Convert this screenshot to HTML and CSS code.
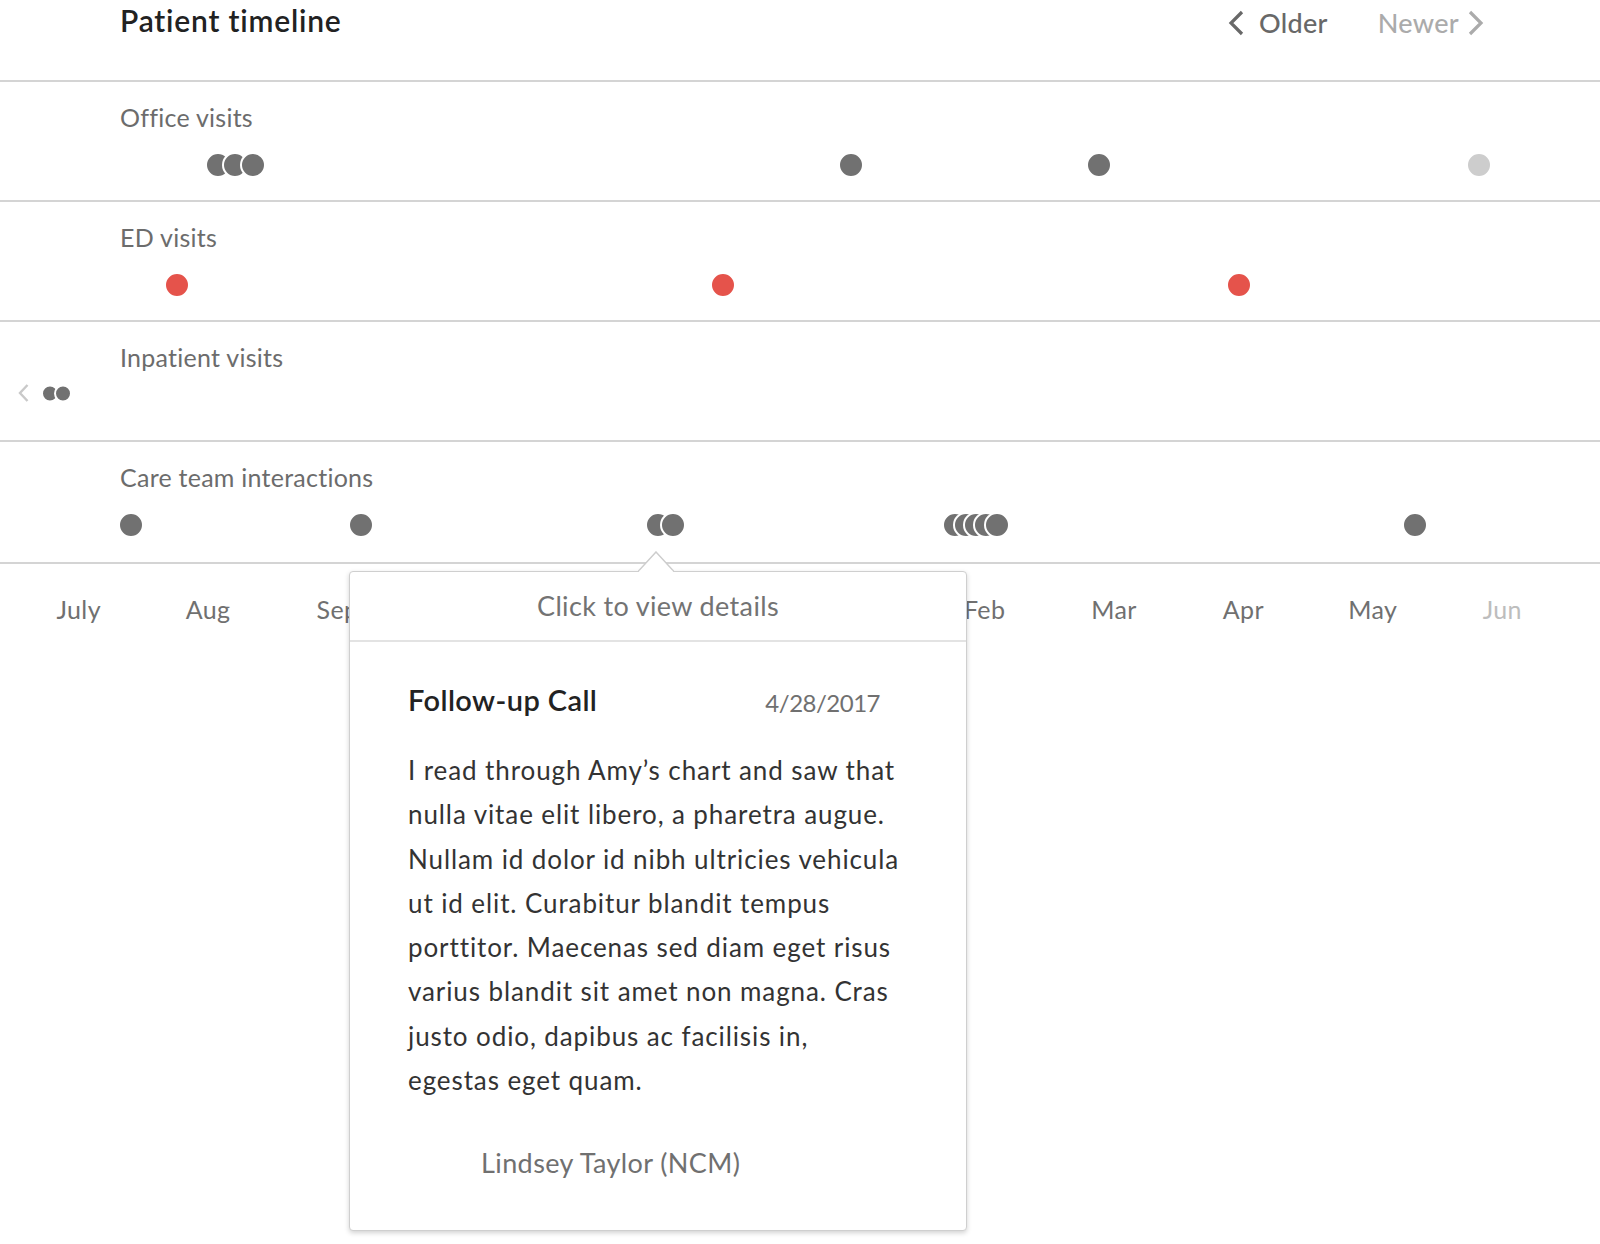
FILE: index.html
```html
<!DOCTYPE html>
<html lang="en">
<head>
<meta charset="utf-8">
<title>Patient timeline</title>
<link rel="stylesheet" href="styles.css">
</head>
<body>
<div class="page">
  <header class="header">
    <h1 class="title">Patient timeline</h1>
    <nav class="pager">
      <span class="pager-btn older">
        <svg class="chev" width="18" height="26" viewBox="0 0 18 26"><path d="M15 2 L4 13 L15 24" fill="none" stroke="currentColor" stroke-width="3.2"/></svg>
        <span>Older</span>
      </span>
      <span class="pager-btn newer">
        <span>Newer</span>
        <svg class="chev" width="18" height="26" viewBox="0 0 18 26"><path d="M3 2 L14 13 L3 24" fill="none" stroke="currentColor" stroke-width="3.2"/></svg>
      </span>
    </nav>
  </header>

  <section class="row">
    <div class="label">Office visits</div>
    <div class="track">
      <span class="dot" style="left:218px"></span>
      <span class="dot" style="left:235px"></span>
      <span class="dot" style="left:253px"></span>
      <span class="dot" style="left:851px"></span>
      <span class="dot" style="left:1099px"></span>
      <span class="dot future" style="left:1479px"></span>
    </div>
  </section>

  <section class="row">
    <div class="label">ED visits</div>
    <div class="track">
      <span class="dot red" style="left:177px"></span>
      <span class="dot red" style="left:723px"></span>
      <span class="dot red" style="left:1239px"></span>
    </div>
  </section>

  <section class="row">
    <div class="label">Inpatient visits</div>
    <div class="track">
      <div class="earlier">
        <svg class="chev-sm" width="13" height="19" viewBox="0 0 13 19"><path d="M10.5 1.5 L3 9.5 L10.5 17.5" fill="none" stroke="currentColor" stroke-width="2.4"/></svg>
        <span class="mini-dots">
          <span class="dot small"></span>
          <span class="dot small"></span>
        </span>
      </div>
    </div>
  </section>

  <section class="row row-last">
    <div class="label">Care team interactions</div>
    <div class="track">
      <span class="dot" style="left:131px"></span>
      <span class="dot" style="left:361px"></span>
      <span class="dot" style="left:658px"></span>
      <span class="dot" style="left:673px"></span>
      <span class="dot" style="left:955px"></span>
      <span class="dot" style="left:966px"></span>
      <span class="dot" style="left:976px"></span>
      <span class="dot" style="left:986px"></span>
      <span class="dot" style="left:997px"></span>
      <span class="dot" style="left:1415px"></span>
    </div>
  </section>

  <div class="months">
    <span>July</span><span>Aug</span><span>Sep</span><span>Oct</span><span>Nov</span><span>Dec</span>
    <span>Jan</span><span>Feb</span><span>Mar</span><span>Apr</span><span>May</span><span class="muted">Jun</span>
  </div>

  <div class="popover">
    <svg class="arrow" width="36" height="24" viewBox="0 0 36 24"><path d="M0 20.5 L18 1 L36 20.5" fill="#fff" stroke="#cdcdcd" stroke-width="1.5"/><rect x="1.2" y="19.8" width="33.6" height="4" fill="#fff"/></svg>
    <div class="pop-head">Click to view details</div>
    <div class="pop-body">
      <div class="pop-title-row">
        <span class="pop-title">Follow-up Call</span>
        <span class="pop-date">4/28/2017</span>
      </div>
      <p class="pop-text">I read through Amy’s chart and saw that<br>nulla vitae elit libero, a pharetra augue.<br>Nullam id dolor id nibh ultricies vehicula<br>ut id elit. Curabitur blandit tempus<br>porttitor. Maecenas sed diam eget risus<br>varius blandit sit amet non magna. Cras<br>justo odio, dapibus ac facilisis in,<br>egestas eget quam.</p>
      <div class="pop-author">Lindsey Taylor (NCM)</div>
    </div>
  </div>
</div>
</body>
</html>
```

FILE: styles.css
```css
* { box-sizing: border-box; }

html, body {
  margin: 0;
  padding: 0;
  background: #fff;
}

body {
  font-family: Lato, "Open Sans", sans-serif;
  color: #333;
}

.page {
  position: relative;
  width: 1600px;
  min-height: 1244px;
}

.header {
  display: flex;
  align-items: flex-start;
  height: 80px;
  padding: 2px 115px 0 120px;
}

.title {
  margin: 0;
  font-size: 30px;
  line-height: 36px;
  font-weight: 600;
  letter-spacing: 0.8px;
  color: #222;
}

.pager {
  margin-left: auto;
  display: flex;
  align-items: center;
  gap: 50px;
  padding-top: 3px;
  font-size: 27px;
  line-height: 36px;
  font-weight: 500;
  letter-spacing: 0.3px;
}

.pager-btn {
  display: flex;
  align-items: center;
  gap: 14px;
}

.older { color: #686868; }
.newer { color: #ababab; gap: 8px; }

.chev { display: block; }

.row {
  border-top: 2px solid #d4d4d4;
  height: 120px;
  display: flex;
  flex-direction: column;
}

.row-last { height: 122px; }

.label {
  padding: 20px 0 0 120px;
  font-size: 25px;
  line-height: 30px;
  letter-spacing: 0.25px;
  color: #6c6c6c;
}

.track {
  position: relative;
  height: 65px;
}

.dot {
  position: absolute;
  top: 50%;
  width: 26px;
  height: 26px;
  border-radius: 50%;
  background: #717171;
  border: 2px solid #fff;
  transform: translate(-50%, -50%);
}

.dot.red { background: #e5534b; }
.dot.future { background: #cdcdcd; }

.earlier {
  position: absolute;
  left: 17px;
  top: 21px;
  transform: translateY(-50%);
  display: flex;
  align-items: center;
  gap: 11px;
  color: #c9c9c9;
}

.chev-sm { display: block; }

.mini-dots {
  display: flex;
  align-items: center;
}

.dot.small {
  position: static;
  transform: none;
  width: 18px;
  height: 18px;
}

.dot.small + .dot.small { margin-left: -5px; }

.months {
  border-top: 2px solid #d4d4d4;
  display: grid;
  grid-template-columns: repeat(12, 1fr);
  padding: 30px 33px 0 14px;
  font-size: 25px;
  line-height: 30px;
  letter-spacing: 0.4px;
  color: #707070;
  text-align: center;
}

.months .muted { color: #bdbdbd; }

.popover {
  position: absolute;
  left: 349px;
  top: 571px;
  width: 618px;
  height: 660px;
  background: #fff;
  border: 1px solid #cfcfcf;
  border-radius: 4px;
  box-shadow: 0 2px 5px rgba(0, 0, 0, 0.18);
}

.arrow {
  position: absolute;
  left: 288px;
  top: -21px;
}

.pop-head {
  height: 70px;
  border-bottom: 2px solid #e3e3e3;
  display: flex;
  align-items: center;
  justify-content: center;
  font-size: 27px;
  line-height: 30px;
  letter-spacing: 0.35px;
  color: #737373;
}

.pop-body {
  padding: 41px 86px 0 58px;
}

.pop-title-row {
  display: flex;
  justify-content: space-between;
  align-items: flex-start;
}

.pop-title {
  font-size: 29px;
  line-height: 34px;
  font-weight: 600;
  letter-spacing: 0.4px;
  color: #222;
}

.pop-date {
  padding-top: 3px;
  font-size: 24px;
  line-height: 34px;
  letter-spacing: -0.5px;
  color: #707070;
}

.pop-text {
  margin: 28px 0 0;
  font-size: 26px;
  line-height: 44.3px;
  letter-spacing: 0.9px;
  color: #333;
  white-space: nowrap;
}

.pop-author {
  margin: 46px 0 0 73px;
  font-size: 27px;
  line-height: 30px;
  letter-spacing: 0.4px;
  color: #707070;
}
```
